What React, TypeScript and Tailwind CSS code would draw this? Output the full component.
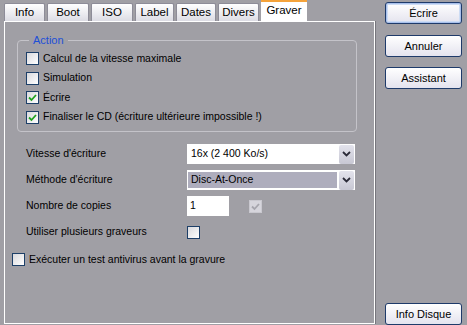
// Graver tab of a CD burning settings dialog, XP look.
const font = { fontFamily: '"Liberation Sans", Arial, sans-serif' };

const tabs = [
  { label: 'Info', w: 'w-[41px]' },
  { label: 'Boot', w: 'w-[42px]' },
  { label: 'ISO', w: 'w-[42px]' },
  { label: 'Label', w: 'w-[39px]' },
  { label: 'Dates', w: 'w-[40px]' },
  { label: 'Divers', w: 'w-[41px]' },
];

function Check({ checked = false, disabled = false }: { checked?: boolean; disabled?: boolean }) {
  return (
    <span
      className={
        disabled
          ? 'flex h-[13px] w-[13px] shrink-0 items-center justify-center border border-[#c9c8cf] bg-[#d6d5dc]'
          : 'flex h-[13px] w-[13px] shrink-0 items-center justify-center border border-[#1d3f68] bg-gradient-to-br from-[#d9d9dd] to-[#ffffff]'
      }
    >
      {checked && (
        <svg width="9" height="9" viewBox="0 0 9 9">
          <path
            d="M1 4.5 L3.5 7 L8 2"
            fill="none"
            stroke={disabled ? '#a6a5ad' : '#21a221'}
            strokeWidth="1.8"
          />
        </svg>
      )}
    </span>
  );
}

function Chevron() {
  return (
    <span className="flex h-[19px] w-[15px] items-center justify-center rounded-[2px] bg-gradient-to-b from-[#e3e3ec] to-[#c7c7d3]">
      <svg width="9" height="6" viewBox="0 0 9 6">
        <path d="M1 1 L4.5 4.5 L8 1" fill="none" stroke="#2b2b38" strokeWidth="1.8" />
      </svg>
    </span>
  );
}

function Btn({ label, primary = false }: { label: string; primary?: boolean }) {
  return (
    <button
      className={
        'h-[22px] w-[77px] rounded-[3px] border border-[#1e3a6a] bg-gradient-to-b from-[#ffffff] to-[#e4e3ee] text-[11px] text-black ' +
        (primary ? 'shadow-[inset_0_0_0_1px_#a8c0ec,inset_0_0_0_2px_#cddcf4]' : '')
      }
    >
      {label}
    </button>
  );
}

export default function App() {
  return (
    <div className="flex h-[325px] w-[467px] bg-[#a09fa5] text-[10.5px] text-black" style={font}>
      {/* Left: tab strip + page */}
      <div className="flex w-[376px] flex-col">
        <div className="flex h-[21px] items-end gap-[2px] pl-[4px]">
          {tabs.map((t) => (
            <div
              key={t.label}
              className={`${t.w} flex h-[18px] items-center justify-center rounded-t-[2px] border border-b-0 border-[#8d8c98] bg-gradient-to-b from-[#ffffff] to-[#dcdce4] text-[11.5px]`}
            >
              {t.label}
            </div>
          ))}
          <div className="flex h-[21px] w-[46px] flex-col bg-white text-[11.5px]">
            <div className="h-[2px] bg-[#f5a33a]" />
            <div className="flex flex-1 items-center justify-center pb-[2px]">Graver</div>
          </div>
        </div>

        <div className="mb-[1px] ml-[4px] mr-[1px] flex flex-1 flex-col border border-white shadow-[1px_0_0_#77767d]">
          <fieldset className="ml-[12px] mr-[17px] mt-[12px] rounded-[4px] border border-[#c4c3c9] pb-[4px] pl-[8px] pt-[2px]">
            <legend className="ml-[3px] px-[4px] text-[11px] leading-[13px] text-[#1d4fd8]">Action</legend>
            <div className="flex flex-col">
              {[
                ['Calcul de la vitesse maximale', false],
                ['Simulation', false],
                ['Écrire', true],
                ['Finaliser le CD (écriture ultérieure impossible !)', true],
              ].map(([label, on]) => (
                <label key={label as string} className="flex h-[19.5px] items-center gap-[4px]">
                  <Check checked={on as boolean} />
                  <span>{label}</span>
                </label>
              ))}
            </div>
          </fieldset>

          <div className="ml-[21px] mt-[12px] flex flex-col gap-[6px]">
            <div className="flex h-[20px] items-center">
              <span className="w-[161px]">Vitesse d'écriture</span>
              <div className="flex h-[20px] w-[168px] items-center bg-white pr-[1px]">
                <span className="flex-1 pl-[4px]">16x (2 400 Ko/s)</span>
                <Chevron />
              </div>
            </div>
            <div className="flex h-[20px] items-center">
              <span className="w-[161px]">Méthode d'écriture</span>
              <div className="flex h-[20px] w-[168px] items-center bg-white pr-[1px]">
                <span className="mr-[1px] flex h-[18px] flex-1 items-center border border-white bg-[#aeadbd] pl-[3px]">
                  Disc-At-Once
                </span>
                <Chevron />
              </div>
            </div>
            <div className="flex h-[20px] items-center">
              <span className="w-[161px]">Nombre de copies</span>
              <div className="flex h-[20px] w-[42px] items-center bg-white pl-[3px]">1</div>
              <span className="ml-[20px]">
                <Check checked disabled />
              </span>
            </div>
            <div className="flex h-[20px] items-center">
              <span className="w-[161px]">Utiliser plusieurs graveurs</span>
              <Check />
            </div>
          </div>

          <label className="ml-[7px] mt-[10px] flex items-center gap-[4px]">
            <Check />
            <span>Exécuter un test antivirus avant la gravure</span>
          </label>
        </div>
      </div>

      {/* Right: action buttons */}
      <div className="ml-[9px] flex flex-col pt-[2px]">
        <Btn label="Écrire" primary />
        <div className="mt-[11px]">
          <Btn label="Annuler" />
        </div>
        <div className="mt-[10px]">
          <Btn label="Assistant" />
        </div>
        <div className="mt-auto">
          <Btn label="Info Disque" />
        </div>
      </div>
    </div>
  );
}
